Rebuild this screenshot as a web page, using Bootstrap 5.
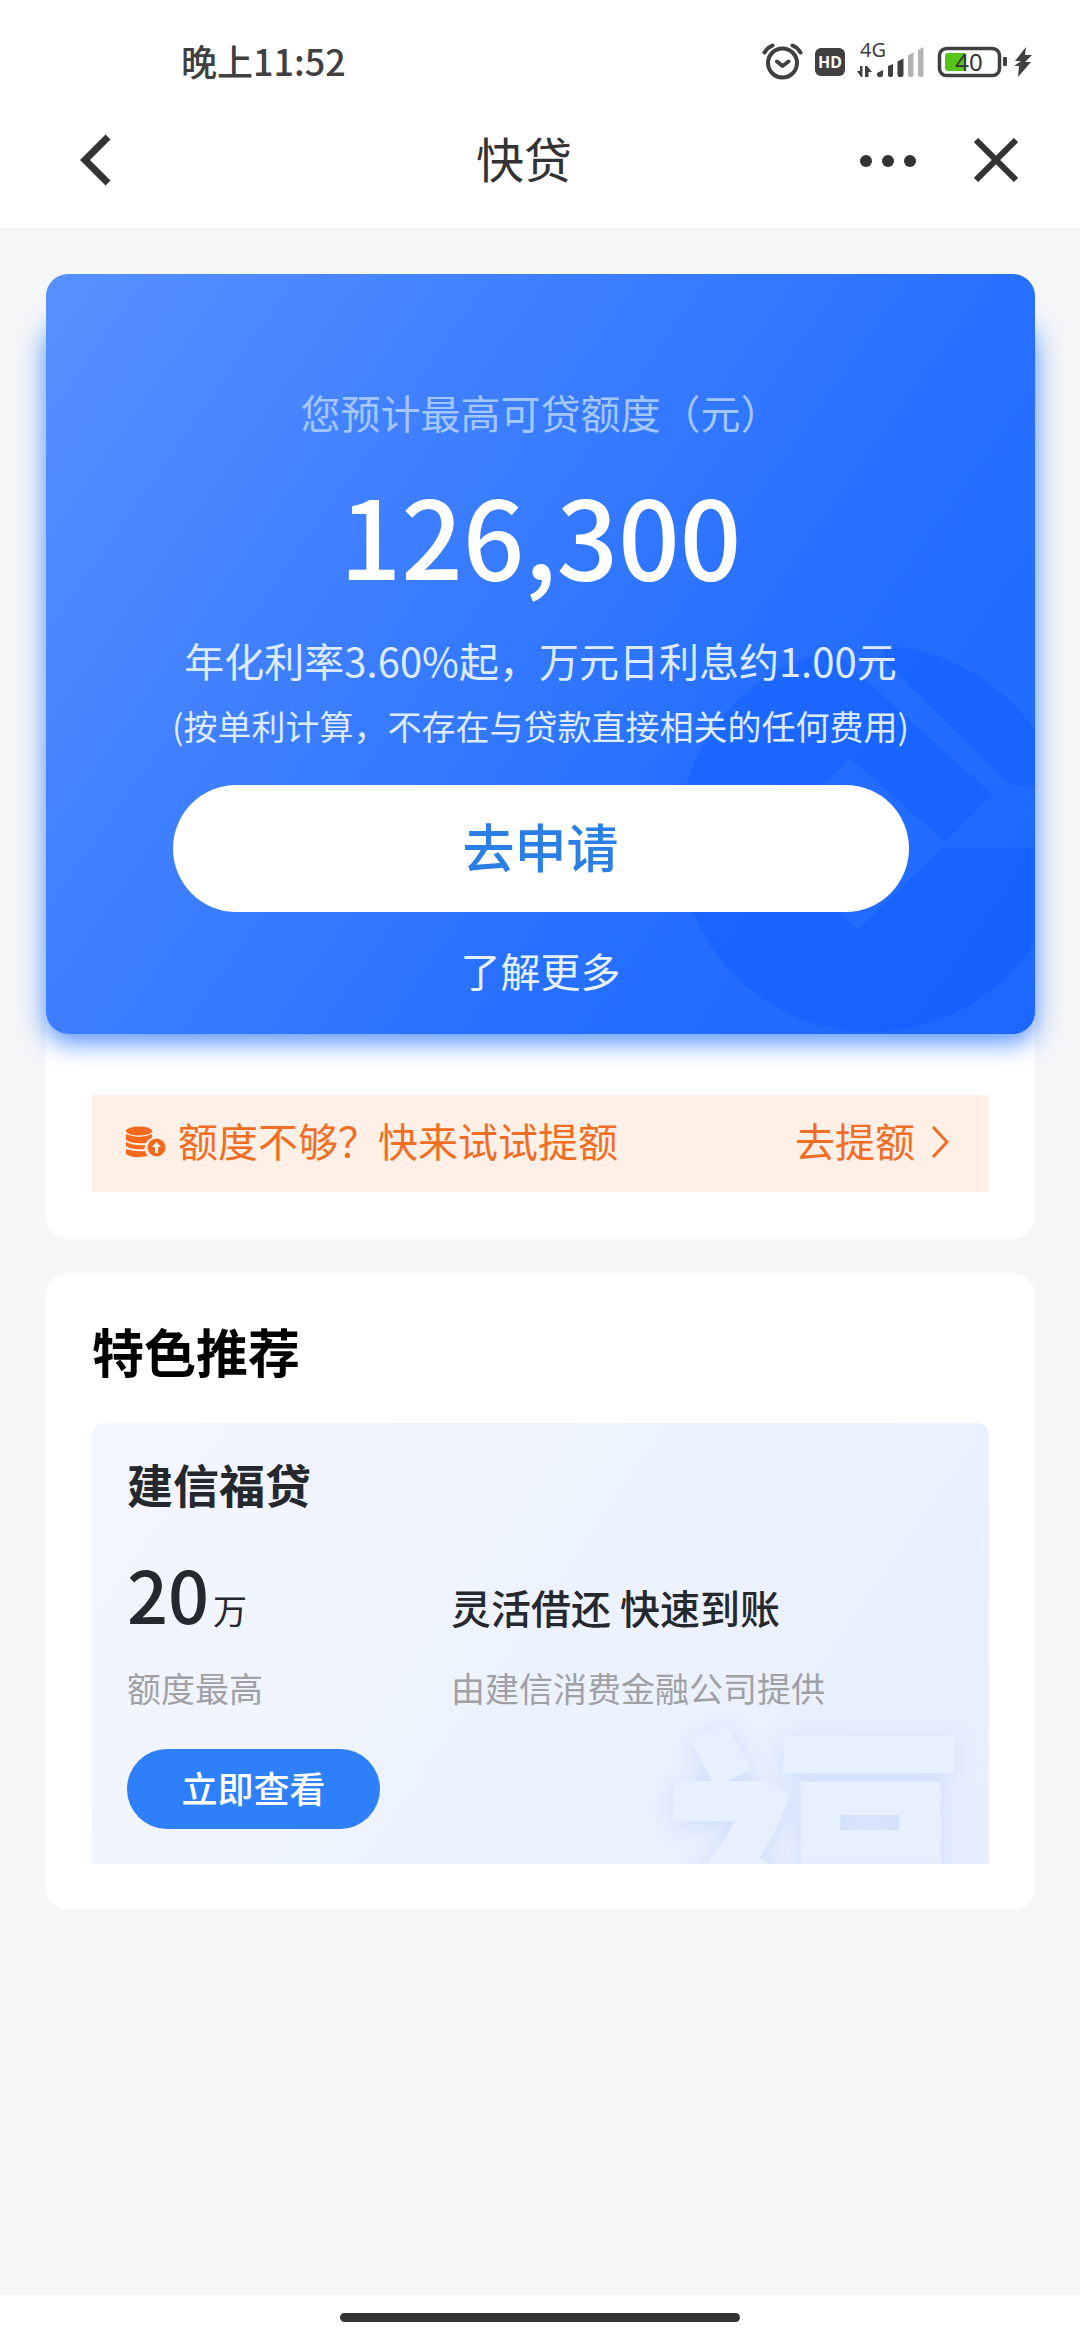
<!DOCTYPE html>
<html lang="zh-CN">
<head>
<meta charset="utf-8">
<meta name="viewport" content="width=device-width, initial-scale=1">
<title>快贷</title>
<link href="https://cdn.jsdelivr.net/npm/bootstrap@5.3.0/dist/css/bootstrap.min.css" rel="stylesheet">
<style>
  body { font-family: "Noto Sans CJK SC", "Noto Sans", sans-serif; background: #f4f6f8; color: #333; }
  svg { display: block; flex: none; }
  .fs-note { font-size: 34px; line-height: 48px; }
  .fs-copy { font-size: 40px; line-height: 56px; }
  .fs-title { font-size: 48px; line-height: 64px; }
  .fs-head { font-size: 52px; line-height: 72px; }
  .plain-btn { padding: 0; border: 0; background: none; color: #333; }

  .status-bar { height: 92px; padding: 32px 47px 0 181px; color: #404040; }
  .status-time { font-size: 36px; line-height: 56px; font-weight: 500; }
  .title-bar { height: 136px; padding: 0 62px 0 80px; }
  .title-text { padding: 0 0 6px 76px; }
  .title-tools { gap: 58px; }

  .page-body { padding: 46px 45px 0 46px; }
  .panel { border-radius: 22px; background: #fff; }

  .hero { position: relative; z-index: 0; padding: 110px 40px 36px; color: #dcebff; }
  .hero-shade { position: absolute; z-index: -2; inset: 44px 0 0; border-radius: 22px; box-shadow: 0 8px 26px rgba(20, 104, 255, .75); }
  .hero-art { position: absolute; z-index: -1; inset: 0; border-radius: 22px; overflow: hidden;
    background: linear-gradient(125deg, #5890ff 0%, #3b7dff 38%, #2770ff 64%, #1c67ff 100%); }
  .hero-art svg { position: absolute; right: -31px; bottom: 2px; }
  .hero-label { color: #a3c6ff; }
  .hero-amount { font-size: 108px; line-height: 140px; font-weight: 500; color: #fff; padding-top: 23px; }
  .hero-rate { padding-top: 29px; }
  .hero-rule { padding-top: 14px; }
  .apply-btn { width: 736px; max-width: 100%; height: 127px; margin-top: 35px; padding: 0 0 6px; --bs-btn-font-size: 52px; font-weight: 500;
    --bs-btn-bg: #fff; --bs-btn-color: #2a7ee4; --bs-btn-hover-bg: #fff; --bs-btn-hover-color: #2a7ee4; }
  .more-link { margin-top: 30px; color: #e6f1ff; }

  .raise-wrap { padding: 61px 46px 47px; }
  .raise-bar { height: 97px; padding: 0 40px 8px 34px; background: #fff0e7; color: #f06d23; }

  .feature { margin-top: 34px; padding: 42px 46px 46px; }
  .feature-title { color: #000; }
  .offer { position: relative; z-index: 0; overflow: hidden; margin-top: 36px; padding: 27px 35px 35px; border-radius: 12px 12px 0 0;
    background: linear-gradient(125deg, #f4f6fe 0%, #edf3fe 50%, #e7eefd 100%); color: #25282d; }
  .offer-name { font-size: 46px; line-height: 66px; }
  .offer-sum { font-size: 72px; line-height: 80px; font-weight: 500; }
  .offer-grid { margin-top: 37px; display: grid; grid-template-columns: 324px 1fr; row-gap: 29px; align-items: baseline; }
  .hint { color: #a0a1a5; }
  .view-btn { width: 253px; height: 80px; margin-top: 37px; --bs-btn-padding-y: 0; padding: 0 0 4px; --bs-btn-font-size: 36px; font-weight: 500; --bs-btn-color: #fff;
    --bs-btn-bg: #2d80fa; --bs-btn-hover-bg: #2d80fa; --bs-btn-hover-color: #fff; }
  .offer-mark { position: absolute; z-index: -1; right: 20px; top: 276px; font-size: 310px; line-height: 310px; font-weight: 900;
    color: #e6f0fe; text-shadow: 0 4px 24px #cddcfb; }

  .home-area { height: 45px; background: #fff; }
  .home-pill { width: 400px; height: 9px; background: #333; }
</style>
</head>
<body class="d-flex flex-column min-vh-100">

<header class="bg-white">
  <div class="status-bar d-flex justify-content-between align-items-start">
    <span class="status-time">晚上11:52</span>
    <svg width="272" height="60" viewBox="760 32 272 60" fill="none" font-family="Noto Sans, sans-serif" aria-label="status">
      <g stroke="#404040" stroke-width="4" stroke-linecap="round" stroke-linejoin="round">
        <circle cx="781.500" cy="63" r="14.500"/>
        <path d="M776 61.500l5.500 4.500 6-4.500M763.500 52.500q3-5 8-7M799.500 52.500q-3-5-8-7"/>
      </g>
      <rect x="814" y="48" width="30" height="28" rx="6" fill="#404040"/>
      <text x="829" y="67.500" font-size="16" font-weight="700" text-anchor="middle" fill="#fff">HD</text>
      <text x="859" y="57" font-size="20" fill="#404040">4G</text>
      <path fill="#404040" d="M861.500 66v11h-1.500l-4-6h3v-5zM864 66h2l5 6h-3.500v5H864zM876 73l6-3v5q0 2-2 2h-2q-2 0-2-2zM887 66l5-2v11q0 2-2 2h-1q-2 0-2-2zM896.500 61.500l6-3V75q0 2-2 2h-2q-2 0-2-2z"/>
      <path fill="#b4b4b4" d="M907 55.500l5.500-3V75q0 2-2 2H909q-2 0-2-2zM917 50l5.500-3V75q0 2-2 2H919q-2 0-2-2z"/>
      <rect x="938.500" y="48.500" width="60" height="27" rx="7" stroke="#404040" stroke-width="3.500"/>
      <path fill="#57c41c" d="M947 53h17v18h-17q-3 0-3-3V56q0-3 3-3z"/>
      <text x="968" y="71" font-size="24" text-anchor="middle" fill="#333">40</text>
      <rect x="1002" y="57" width="4" height="9" rx="1" fill="#404040"/>
      <path fill="#404040" d="M1025 47l-11 14h6l-7 5h5l-1 11 13-15h-6l7-7h-7z"/>
    </svg>
  </div>
  <nav class="title-bar d-flex justify-content-between align-items-center">
    <button type="button" class="plain-btn" aria-label="返回">
      <svg width="32" height="54" viewBox="0 0 32 54" fill="none" stroke="#333" stroke-width="7"><path d="M28 4L5 27l23 23"/></svg>
    </button>
    <h1 class="title-text fs-title fw-normal m-0">快贷</h1>
    <div class="title-tools d-flex align-items-center">
      <button type="button" class="plain-btn" aria-label="更多">
        <svg width="56" height="44" viewBox="0 0 56 44" fill="#333"><circle cx="6" cy="23" r="6"/><circle cx="28" cy="23" r="6"/><circle cx="50" cy="23" r="6"/></svg>
      </button>
      <button type="button" class="plain-btn" aria-label="关闭">
        <svg width="44" height="44" viewBox="0 0 44 44" stroke="#333" stroke-width="6"><path d="M2 2l40 40M42 2L2 42"/></svg>
      </button>
    </div>
  </nav>
</header>

<main class="page-body flex-grow-1">
  <section class="panel">
    <div class="hero d-flex flex-column align-items-center text-center">
      <div class="hero-shade"></div>
      <div class="hero-art">
        <svg width="390" height="390" viewBox="0 0 390 390" fill="#0050ff" fill-opacity=".26">
          <path d="M212 4A193 193 0 0 1 384 143L354 143 334 143 205 16z"/>
          <path d="M157 8L316 153 269 200 174 116 89 203 182 288 266 206 388 206A193 193 0 1 1 157 8z"/>
        </svg>
      </div>
      <div class="hero-label fs-copy">您预计最高可贷额度（元）</div>
      <div class="hero-amount">126,300</div>
      <div class="hero-rate fs-copy">年化利率3.60%起，万元日利息约1.00元</div>
      <div class="hero-rule fs-note">(按单利计算，不存在与贷款直接相关的任何费用)</div>
      <button type="button" class="btn rounded-pill border-0 apply-btn">去申请</button>
      <a href="#" class="more-link fs-copy text-decoration-none">了解更多</a>
    </div>
    <div class="raise-wrap">
      <a href="#" class="raise-bar d-flex align-items-center text-decoration-none fs-copy">
        <svg class="mt-1" width="40" height="32" viewBox="0 0 40 32" fill="#f46a1c">
          <ellipse cx="13" cy="5" rx="13" ry="4.500"/>
          <path d="M0 8q13 6 26 0v4q-4 1-6 5Q6 18 0 14zM0 16q8 4 19 3l-.500 4Q6 24 0 20zM0 23q8 3 19 2 1 3 3 5Q6 33 0 28z"/>
          <circle cx="30.500" cy="21.500" r="9"/>
          <path fill="#fff" d="M30.500 16l4.500 5h-3v6h-3v-6h-3z"/>
        </svg>
        <span class="ms-2 ps-1">额度不够？快来试试提额</span>
        <span class="ms-auto">去提额</span>
        <svg class="ms-3 mt-1" width="18" height="34" viewBox="0 0 18 34" fill="none" stroke="#f06d23" stroke-width="3"><path d="M2 2l14 15L2 32"/></svg>
      </a>
    </div>
  </section>

  <section class="panel feature">
    <h2 class="feature-title fs-head fw-bold m-0">特色推荐</h2>
    <div class="offer">
      <div class="offer-mark" aria-hidden="true">福</div>
      <h3 class="offer-name fw-bold m-0">建信福贷</h3>
      <div class="offer-grid">
        <div><span class="offer-sum">20</span><span class="fs-note ms-1">万</span></div>
        <div class="fs-copy fw-medium">灵活借还 快速到账</div>
        <div class="fs-note hint">额度最高</div>
        <div class="fs-note hint">由建信消费金融公司提供</div>
      </div>
      <button type="button" class="btn rounded-pill border-0 view-btn">立即查看</button>
    </div>
  </section>
</main>

<footer class="home-area d-flex justify-content-center align-items-center">
  <div class="home-pill rounded-pill"></div>
</footer>

<script src="https://cdn.jsdelivr.net/npm/bootstrap@5.3.0/dist/js/bootstrap.bundle.min.js"></script>
</body>
</html>
